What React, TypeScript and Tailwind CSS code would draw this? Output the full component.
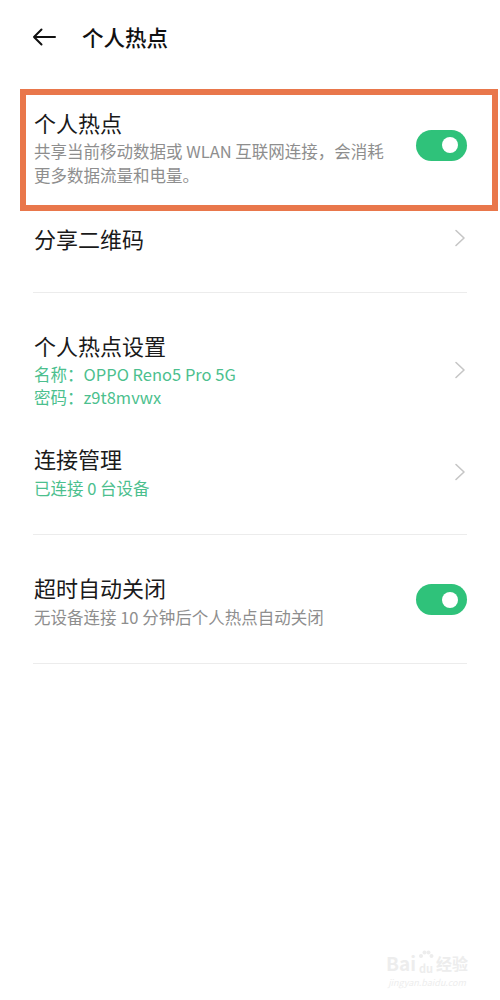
import React from "react";

const FONT = { fontFamily: '"Noto Sans CJK SC", "Noto Sans", sans-serif' };

function Toggle() {
  return (
    <div className="relative h-[31px] w-[51px] shrink-0 rounded-full bg-[#2fc27a]">
      <div className="absolute right-[9px] top-[7.5px] h-[16px] w-[16px] rounded-full bg-white" />
    </div>
  );
}

function Chevron() {
  return (
    <svg width="12" height="18" viewBox="0 0 12 18" className="shrink-0">
      <path d="M2 1.5 L10 9 L2 16.5" fill="none" stroke="#c6c6c6" strokeWidth="1.6" strokeLinecap="round" strokeLinejoin="round" />
    </svg>
  );
}

function Divider() {
  return <div className="mx-[33px] h-px bg-[#ececec]" />;
}

export default function App() {
  return (
    <div className="relative min-h-[1000px] w-[500px] bg-white" style={FONT}>
      {/* Header */}
      <div className="flex h-[74px] items-center pl-[32px] pb-[1px]">
        <svg width="24" height="18" viewBox="0 0 24 18" className="shrink-0">
          <path d="M23 9 H2 M9.5 1.5 L2 9 L9.5 16.5" fill="none" stroke="#111" strokeWidth="2" strokeLinecap="round" strokeLinejoin="round" />
        </svg>
        <div className="ml-[26px] text-[21.5px] font-medium leading-[30px] text-[#111]">个人热点</div>
      </div>

      {/* Highlighted hotspot row */}
      <div className="ml-[20px] mr-[2px] mt-[15px] border-[6px] border-[#e9774b] pl-[8px] pr-[25px] pt-[12px] pb-[18px]">
        <div className="flex items-center">
          <div className="flex-1">
            <div className="text-[22px] leading-[30px] text-[#1a1a1a]">个人热点</div>
            <div className="mt-[2px] text-[16.5px] leading-[24px] text-[#8e8e8e]">
              共享当前移动数据或 WLAN 互联网连接，会消耗
              <br />
              更多数据流量和电量。
            </div>
          </div>
          <div className="mb-[4px]">
            <Toggle />
          </div>
        </div>
      </div>

      {/* Share QR */}
      <div className="flex items-center justify-between pl-[34px] pr-[34px] pt-[12px] pb-[39px]">
        <div className="text-[22px] leading-[30px] text-[#1a1a1a]">分享二维码</div>
        <Chevron />
      </div>
      <Divider />

      {/* Hotspot settings */}
      <div className="flex items-center justify-between pl-[34px] pr-[34px] pt-[37px]">
        <div>
          <div className="text-[22px] leading-[30px] text-[#1a1a1a]">个人热点设置</div>
          <div className="mt-[3px] text-[16.5px] leading-[23px] text-[#4cbf8e]">
            名称：OPPO Reno5 Pro 5G
            <br />
            密码：z9t8mvwx
          </div>
        </div>
        <Chevron />
      </div>

      {/* Connection management */}
      <div className="flex items-center justify-between pl-[34px] pr-[34px] pt-[34px] pb-[34px]">
        <div>
          <div className="text-[22px] leading-[30px] text-[#1a1a1a]">连接管理</div>
          <div className="mt-[3px] text-[16.5px] leading-[24px] text-[#4cbf8e]">已连接 0 台设备</div>
        </div>
        <Chevron />
      </div>
      <Divider />

      {/* Auto off */}
      <div className="flex items-center justify-between pl-[34px] pr-[33px] pt-[37px] pb-[34px]">
        <div>
          <div className="text-[22px] leading-[30px] text-[#1a1a1a]">超时自动关闭</div>
          <div className="mt-[3px] text-[16.5px] leading-[24px] text-[#8e8e8e]">无设备连接 10 分钟后个人热点自动关闭</div>
        </div>
        <div className="mb-[2px]">
          <Toggle />
        </div>
      </div>
      <Divider />

      {/* Watermark */}
      <div className="absolute bottom-[12px] right-[32px] flex flex-col items-center text-[#ededed]">
        <div className="flex items-end">
          <span className="text-[19px] font-bold leading-[22px]">Bai</span>
          <div className="mx-[2px] flex flex-col items-center">
            <svg width="16" height="12" viewBox="0 0 16 12">
              <g fill="#ededed">
                <circle cx="3" cy="6" r="2" />
                <circle cx="6.5" cy="2.5" r="2" />
                <circle cx="10.5" cy="2.5" r="2" />
                <circle cx="13.5" cy="6" r="2" />
              </g>
            </svg>
            <span className="text-[11px] font-bold leading-[12px]">du</span>
          </div>
          <span className="text-[16px] font-bold leading-[22px]">经验</span>
        </div>
        <div className="mt-[3px] text-[9px] italic leading-[11px]">jingyan.baidu.com</div>
      </div>
    </div>
  );
}
